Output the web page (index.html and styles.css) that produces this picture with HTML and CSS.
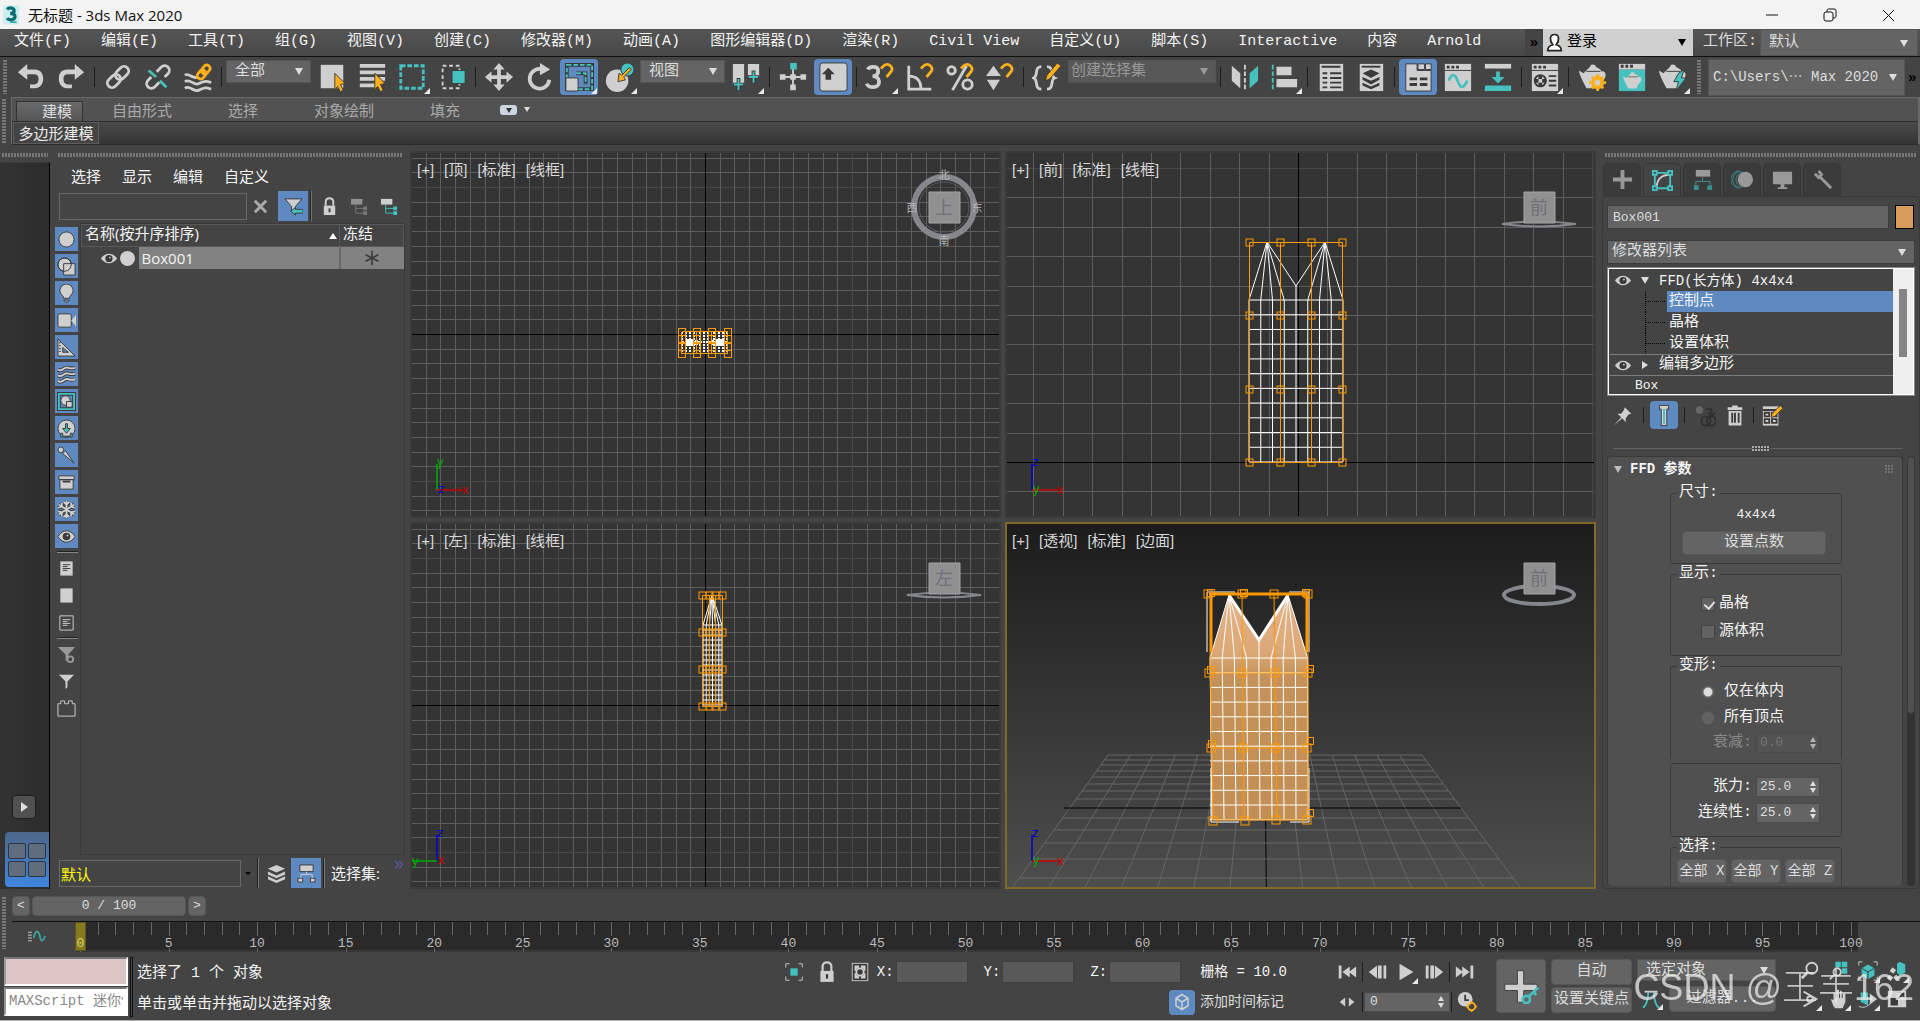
FILE: index.html
```html
<!DOCTYPE html>
<html lang="zh-CN">
<head>
<meta charset="utf-8">
<title>无标题 - 3ds Max 2020</title>
<link rel="stylesheet" href="styles.css">
</head>
<body>
<svg class="sprite" aria-hidden="true">
  <symbol id="undo" viewBox="0 0 32 32"><path class="l" d="M2 11 12 2v6h8c6 0 9 4 9 10s-4 10-10 10h-4v-4h3c4 0 6-2 6-6s-2-5-5-5h-7v6z"/></symbol>
  <symbol id="redo" viewBox="0 0 32 32"><path class="l" d="M30 11 20 2v6h-8c-6 0-9 4-9 10s4 10 10 10h4v-4h-3c-4 0-6-2-6-6s2-5 5-5h7v6z"/></symbol>
  <symbol id="link" viewBox="0 0 32 32"><g class="sl w3" transform="rotate(-45 16 16)"><rect x="2" y="11" width="16" height="10" rx="5"/><rect x="14" y="11" width="16" height="10" rx="5"/></g></symbol>
  <symbol id="unlink" viewBox="0 0 32 32"><g class="sl w3" transform="rotate(-45 16 16)"><path d="M11 11H6a5 5 0 0 0 0 10h7M21 21h5a5 5 0 0 0 0-10h-7"/></g><path class="st w3" d="m6 9 8 7m4 4 7 7"/></symbol>
  <symbol id="bind" viewBox="0 0 32 32"><path class="sl w3" d="M2 14c5-3 8 5 14 2M2 21c6-4 9 5 15 2s8-3 13-1M2 28c6-4 9 5 15 2s8-3 13-1"/><g class="so w3" transform="rotate(-50 22 10)"><rect x="13" y="7" width="10" height="7" rx="3"/><rect x="20" y="7" width="10" height="7" rx="3"/></g></symbol>
  <symbol id="pick" viewBox="0 0 32 32"><path class="l" d="M4 3h24v25H4z"/><path class="o edge" d="m19 12 11 11-5 1 3 6-3 2-3-6-3 4z"/></symbol>
  <symbol id="byname" viewBox="0 0 32 32"><path class="l" d="M3 2h27v4H3zm0 7h27v4H3zm0 7h27v4H3zm0 7h17v4H3z"/><path class="o edge" d="m19 12 11 11-5 1 3 6-3 2-3-6-3 4z"/></symbol>
  <symbol id="rectsel" viewBox="0 0 32 32"><path class="st w3" stroke-dasharray="5 2" d="M4 4h24v24H4z"/></symbol>
  <symbol id="winsel" viewBox="0 0 32 32"><path class="sl w2" stroke-dasharray="4 3" d="M6 4h18v24H6z"/><path class="t edge" d="M16 9h14v14H16z"/></symbol>
  <symbol id="move" viewBox="0 0 32 32"><path class="l" d="m16 1 6 7h-4v6h6v-4l7 6-7 6v-4h-6v6h4l-6 7-6-7h4v-6H8v4l-7-6 7-6v4h6V8h-4z"/></symbol>
  <symbol id="rotate" viewBox="0 0 32 32"><path class="sl w4" d="M20 8a10.500 10.500 0 1 0 7 11"/><path class="l" d="m17 1 11 7-11 6z"/></symbol>
  <symbol id="scale" viewBox="0 0 32 32"><path class="sd w4" d="M3 3h27v26H3zM13 12h10v12"/><path class="st w2" stroke-dasharray="5 2" d="M3 3h27v26H3zM13 12h10v12"/><path class="l edge" d="M2 17h13v14H2z"/></symbol>
  <symbol id="place" viewBox="0 0 32 32"><circle class="l" cx="14" cy="20" r="12"/><circle class="t edge" cx="25" cy="8" r="7"/><path class="o edge" d="m27 6-8 8-3-2-1 9 8-2-2-3 8-8z"/></symbol>
  <symbol id="pivot" viewBox="0 0 32 32"><path class="l" d="M2 2h12v22H2zm16 0h12v14H18z"/><path class="sd w4" d="M8 17v14m-6-7h12M24 9v14m-6-7h12"/><path class="st w2" d="M8 18v12m-5-6h10M24 10v12m-5-6h10"/></symbol>
  <symbol id="manip" viewBox="0 0 32 32"><path class="sl w2" d="M5 16h22M16 6v22"/><path class="l" d="M2 13h6v6H2zm22 0h6v6h-6zM13 24h6v6h-6zM13 13h6v6h-6z"/><path class="t" d="M13 1h7v7h-7z"/></symbol>
  <symbol id="keys" viewBox="0 0 32 32"><rect class="l edge" x="2" y="1" width="29" height="30" rx="3"/><path class="d" d="m11 6 7 7h-4v6H8v-6H4z"/></symbol>
  <symbol id="magnet" viewBox="0 0 32 32"><path class="so w3" d="m17 7 3-3c5-4 11 2 8 6l-5 6"/></symbol>
  <symbol id="three" viewBox="0 0 32 32"><path class="sl w4" d="M3 8c2-4 12-4 11 2 0 4-4 5-6 5 4 0 7 2 7 6 0 8-12 7-13 2"/><use href="#magnet"/></symbol>
  <symbol id="angle" viewBox="0 0 32 32"><path class="sl w3" d="M4 4v25h24M4 15c8 0 13 4 13 14"/><use href="#magnet"/></symbol>
  <symbol id="percent" viewBox="0 0 32 32"><circle class="sl w3" cx="7" cy="9" r="4"/><circle class="sl w3" cx="24" cy="24" r="5"/><path class="sl w3" d="M23 4 8 30"/><use href="#magnet"/></symbol>
  <symbol id="spin" viewBox="0 0 32 32"><path class="l" d="m9 4 8 11H1zm0 26 7-11H2z"/><use href="#magnet"/></symbol>
  <symbol id="sets" viewBox="0 0 32 32"><path class="sl w3" d="M10 5c-8 0-3 10-8 12 5 2 0 12 8 12M16 5c8 0 3 10 8 12-5 2 0 12-8 12"/><path class="o edge" d="m27 1 4 3-12 14-5 2 2-6z"/></symbol>
  <symbol id="mirror" viewBox="0 0 32 32"><path class="l" d="m3 4 9 8v16l-9-8z"/><path class="sl w2" stroke-dasharray="5 2" d="M17 3v27"/><path class="t" d="m31 4-9 8v16l9-8z"/></symbol>
  <symbol id="align" viewBox="0 0 32 32"><path class="st w2" stroke-dasharray="5 2" d="M4 3v27"/><path class="l" d="M8 5h16v9H8zm0 13h22v9H8z"/></symbol>
  <symbol id="scene" viewBox="0 0 32 32"><path class="l" d="M4 2h25v29H4z"/><path class="sd w2" d="M6 5h20M7 12h5m3 0h12M7 17h5m3 0h12M7 22h5m3 0h12M7 27h5m3 0h12"/></symbol>
  <symbol id="layers" viewBox="0 0 32 32"><path class="l" d="M4 2h25v29H4z"/><path class="sd w2" d="M6 5h20"/><path class="d" d="m16 8 9 4-9 5-9-5zm-9 8 9 4 9-4v3l-9 5-9-5zm0 6 9 4 9-4v3l-9 4-9-4z"/></symbol>
  <symbol id="ribbon" viewBox="0 0 32 32"><path class="l edge" d="M3 2h12v7h15v22H3zM16 2h7v6h-7zm8 0h6v6h-6z"/><path class="sd w3" d="M7 18h8m3 0h8M7 24h8m3 0h8"/></symbol>
  <symbol id="curve" viewBox="0 0 32 32"><path class="l" d="M2 2h28v29H2z"/><path class="sd w1" d="M2 9h28"/><path class="d" d="M4 4h3v3H4zm5 0h3v3H9zm5 0h3v3h-3z"/><path class="st w3" d="M6 20c4-9 7-7 10 1s6 7 10-1"/></symbol>
  <symbol id="schem" viewBox="0 0 32 32"><path class="l" d="M2 2h28v5H2z"/><path class="t" d="M2 25h28v6H2zM14 10h4v6h5l-7 7-7-7h5z"/></symbol>
  <symbol id="material" viewBox="0 0 32 32"><path class="l" d="M2 2h28v29H2z"/><path class="sd w1" d="M2 9h28"/><path class="d" d="M4 4h3v3H4zm5 0h3v3H9zm5 0h3v3h-3z"/><circle class="sd w2" cx="11" cy="20" r="6"/><path class="d" d="M9 14h4v4H9zm-4 4h4v4H5zm8 0h4v4h-4zm-4 4h4v4H9z"/><path class="sd w2" d="M20 15h8m-8 5h8m-8 5h8"/></symbol>
  <symbol id="pot" viewBox="0 0 32 32"><path class="l" d="M14 5c0-3 6-3 6 0l5 3 1 2c6-1 6 8 0 11l-3 7H10C7 21 4 18 2 9l5 3 4-4z"/><path class="sd w1" d="M10 10h15"/></symbol>
  <symbol id="rsetup" viewBox="0 0 32 32"><use href="#pot"/><circle class="so w4" cx="22" cy="22" r="5"/><path class="so w3" d="M22 13v3m0 12v3m-9-9h3m12 0h3m-15-6 2 2m8 8 2 2m0-12-2 2m-8 8-2 2"/></symbol>
  <symbol id="rframe" viewBox="0 0 32 32"><path class="t" d="M2 8h28v23H2z"/><path class="l" d="M2 2h28v6H2z"/><path class="d" d="M4 3h3v3H4zm5 0h3v3H9zm5 0h3v3h-3z"/><use href="#pot" x="3" y="9" width="26" height="22"/></symbol>
  <symbol id="render" viewBox="0 0 32 32"><use href="#pot"/><path class="t edge" d="m23 12 6-4-3 9h5L20 31l3-10h-5z"/></symbol>

  <symbol id="o-circle" viewBox="0 0 20 20"><circle class="l edge" cx="10" cy="10" r="8"/></symbol>
  <symbol id="o-shape" viewBox="0 0 20 20"><circle class="l edge" cx="8" cy="8" r="7"/><path class="l edge" d="M7 7h12v12H7z"/><circle class="sd w1" cx="8" cy="8" r="7"/></symbol>
  <symbol id="o-bulb" viewBox="0 0 20 20"><path class="l edge" d="M7 15c0-3-4-4-4-8a7 7 0 0 1 14 0c0 4-4 5-4 8zM7 17h6l-2 2H9z"/></symbol>
  <symbol id="o-cam" viewBox="0 0 20 20"><rect class="l edge" x="1" y="3" width="14" height="14" rx="2"/><path class="l" d="m15 10 5-6v12z"/></symbol>
  <symbol id="o-ruler" viewBox="0 0 20 20"><path class="l edge" fill-rule="evenodd" d="M1 1v18h18zm5 9v5h6z"/><path class="sd w1" d="M2 5h2M2 8h2M2 11h2M2 14h2"/></symbol>
  <symbol id="o-wave" viewBox="0 0 20 20"><path class="sd w4" d="M1 5c5 3 6-4 11-2 4 1 3 1 7 0M1 11c5 3 6-4 11-2 4 1 3 1 7 0M1 17c5 3 6-4 11-2 4 1 3 1 7 0"/><path class="sl w2" d="M1 5c5 3 6-4 11-2 4 1 3 1 7 0M1 11c5 3 6-4 11-2 4 1 3 1 7 0M1 17c5 3 6-4 11-2 4 1 3 1 7 0"/></symbol>
  <symbol id="o-group" viewBox="0 0 20 20"><path class="sd w4" d="M2 2h16v16H2z"/><path class="st w2" d="M2 2h16v16H2z"/><circle class="l edge" cx="9" cy="9" r="5"/><path class="l edge" d="M10 10h6v6h-6z"/></symbol>
  <symbol id="o-xref" viewBox="0 0 20 20"><circle class="l edge" cx="10" cy="10" r="9"/><path class="t edge" d="M9 5h2v5h3l-4 5-4-5h3zM4 15h2v3h8v-3h2v4H4z"/></symbol>
  <symbol id="o-bone" viewBox="0 0 20 20"><circle class="l edge" cx="4" cy="4" r="3"/><path class="l edge" d="m6 8 3-3 9 13z"/></symbol>
  <symbol id="o-box" viewBox="0 0 20 20"><path class="l edge" d="M2 3h16v4H2zm1 4h14v10H3z"/><path class="sd w2" d="M6 9h8"/></symbol>
  <symbol id="o-snow" viewBox="0 0 20 20"><path class="sd w4" d="M10 1v18M2 5l16 10M2 15 18 5M7 2l3 3 3-3M7 18l3-3 3 3M1 8l4-1V3m14 5-4-1V3M1 12l4 1v4m14-5-4 1v4"/><path class="sl w2" d="M10 1v18M2 5l16 10M2 15 18 5M7 2l3 3 3-3M7 18l3-3 3 3M1 8l4-1V3m14 5-4-1V3M1 12l4 1v4m14-5-4 1v4"/></symbol>
  <symbol id="o-eye" viewBox="0 0 20 20"><path class="l edge" d="M1 10c5-8 13-8 18 0-5 8-13 8-18 0z"/><circle class="d" cx="10" cy="10" r="4"/><circle class="l" cx="11" cy="9" r="1"/></symbol>
  <symbol id="o-doc" viewBox="0 0 20 20"><path class="l edge" d="M3 2h14v16H3z"/><path class="sd w1" d="M6 6h8M6 8h5M6 10h8M6 12h5"/></symbol>
  <symbol id="o-blank" viewBox="0 0 20 20"><path class="l edge" d="M3 2h14v16H3z"/></symbol>
  <symbol id="o-docinv" viewBox="0 0 20 20"><path class="sl w1" d="M3 3h14v15H3zM6 7h8M6 9h5M6 11h8M6 13h5"/></symbol>
  <symbol id="o-fgear" viewBox="0 0 20 20"><path fill="#999" d="M1 2h18l-7 8v8l-3-2v-6z"/><circle cx="14" cy="15" r="3" fill="#444" stroke="#999" stroke-width="2"/></symbol>
  <symbol id="o-funnel" viewBox="0 0 20 20"><path class="l" d="M2 3h16l-7 7v6l-2 2v-8z"/></symbol>
  <symbol id="o-brick" viewBox="0 0 20 20"><path class="sl w1" d="M1 18V5h3V2h4v3h4V2h4v3h3v13z"/></symbol>
  <symbol id="o-ffilter" viewBox="0 0 20 20"><path class="l edge" d="M1 2h18l-7 8v9l-4-4v-5z"/><path class="t edge" d="m7 15 5-4v2h8v4h-8v2z"/></symbol>
  <symbol id="lock" viewBox="0 0 20 20"><path class="sl w2" d="M6 9V5c0-5 8-5 8 0v4"/><path class="l" d="M4 9h12v10H4z"/><path class="d" d="M9 12h2v4H9z"/></symbol>
  <symbol id="tree" viewBox="0 0 20 20"><path class="l" d="M1 2h12v6H1z"/><path class="st w1" d="M6 8v9h9M6 12h9"/><path class="t" d="M14 10h4v4h-4zm0 5h4v4h-4z"/></symbol>
  <symbol id="stack" viewBox="0 0 20 20"><path class="l" d="m10 1 9 4-9 4-9-4zm-9 7 9 4 9-4v3l-9 4-9-4zm0 5 9 4 9-4v3l-9 4-9-4z"/></symbol>
  <symbol id="hier" viewBox="0 0 20 20"><path class="l edge" d="M3 1h14v7H3zM1 15h5v4H1zm13 0h5v4h-5z"/><path class="sl w1" d="M10 8v3M4 15v-4h12v4"/></symbol>

  <symbol id="p-plus" viewBox="0 0 24 24"><path fill="#999" d="M10 2h4v8h8v4h-8v8h-4v-8H2v-4h8z"/></symbol>
  <symbol id="p-mod" viewBox="0 0 24 24"><path class="st w2" d="M4 4h16v16H4z"/><path class="sl w2" d="M6 19C6 10 12 6 20 6"/><path fill="#444" class="tb" d="M2 2h4v4H2zm16 0h4v4h-4zM2 18h4v4H2zm16 0h4v4h-4z"/></symbol>
  <symbol id="p-hier" viewBox="0 0 24 24"><path fill="#999" d="M5 2h15v7H5z"/><path stroke="#3d8f8e" fill="none" stroke-width="1" d="M12 9v5M5 18v-4h15v4"/><path fill="#3d8f8e" d="M3 18h5v5H3zm14 0h5v5h-5z"/></symbol>
  <symbol id="p-motion" viewBox="0 0 24 24"><circle fill="#999" cx="15" cy="12" r="8"/><path stroke="#3d8f8e" fill="none" stroke-width="1" d="M10 3C-1 6-1 18 10 21M8 3c-11 3-11 15 0 18M12 4C3 7 3 17 12 20"/></symbol>
  <symbol id="p-disp" viewBox="0 0 24 24"><path fill="#999" d="M2 4h20v13H2zm8 13h4v3h3v2H7v-2h3z"/></symbol>
  <symbol id="p-util" viewBox="0 0 24 24"><path fill="none" stroke="#999" stroke-width="3" d="m10 10 11 11M4 6l4 4 3-3-3-4"/></symbol>
  <symbol id="m-pin" viewBox="0 0 24 24"><path class="l" d="m14 3 7 7-3 1-3 4v4l-4-4-9 8 8-9-4-4h4l3-4z"/></symbol>
  <symbol id="m-tube" viewBox="0 0 24 24"><path class="l edge" d="M7 1h10v4h-2v18H9V5H7z"/><path class="t" d="M11 5h2v16h-2z"/></symbol>
  <symbol id="m-uniq" viewBox="0 0 24 24"><circle cx="6" cy="6" r="5" fill="#666" stroke="#333"/><g fill="none" stroke="#2f2f2f" stroke-width="2"><circle cx="13" cy="18" r="5"/><circle cx="19" cy="18" r="5"/><path d="M13 5h6v8m-4-4 4 4 4-4"/></g></symbol>
  <symbol id="m-trash" viewBox="0 0 24 24"><path class="l" d="M4 3h5V1h6v2h5v3H4zm1 4h14v16H5z"/><path class="sd w2" d="M9 9v11m3-11v11m4-11v11"/></symbol>
  <symbol id="m-conf" viewBox="0 0 24 24"><path class="l" d="M2 2h17v21H2z"/><path class="sd w2" d="M2 6h17M4 9h5v4H4zm8 0h5v4h-5zM4 16h5v4H4zm8 0h5v4h-5z"/><path class="o edge" d="m21 1 3 3-9 9-4 1 1-4z"/></symbol>
  <symbol id="eye" viewBox="0 0 20 12"><path class="l" d="M1 6c5-7 13-7 18 0-5 7-13 7-18 0z"/><circle class="d" cx="10" cy="6" r="4"/><circle class="l" cx="11" cy="5" r="1"/></symbol>

  <symbol id="s-iso" viewBox="0 0 24 24"><path class="t" d="M8 8h8v8H8z"/><path class="sl w1" d="M3 7V3h4m10 0h4v4m0 10v4h-4M7 21H3v-4"/></symbol>
  <symbol id="s-abs" viewBox="0 0 24 24"><path class="l" d="M3 2h18v20H3z"/><path class="sd w2" d="M5 4h14v16H5zM12 5v14M6 12h12"/><circle class="d" cx="12" cy="12" r="5"/><circle class="sl w2" cx="12" cy="12" r="4"/></symbol>
  <symbol id="s-cube" viewBox="0 0 24 24"><path class="sl w2" d="m12 2 8 5v10l-8 5-8-5V7zM4 7l8 5 8-5m-8 5v10"/></symbol>
  <symbol id="k-first" viewBox="0 0 24 24"><path class="l" d="M3 5h3v14H3zm4 7 8-6v12zm7 0 8-6v12z"/></symbol>
  <symbol id="k-prev" viewBox="0 0 24 24"><path class="l" d="m2 12 9-7v14zm10-7h4v14h-4zm6 0h3v14h-3z"/></symbol>
  <symbol id="k-play" viewBox="0 0 24 24"><path class="l" d="m5 3 15 9-15 9z"/></symbol>
  <symbol id="k-next" viewBox="0 0 24 24"><path class="l" d="m22 12-9-7v14zM12 5H8v14h4zM6 5H3v14h3z"/></symbol>
  <symbol id="k-last" viewBox="0 0 24 24"><path class="l" d="M21 5h-3v14h3zm-4 7L9 6v12zm-7 0L2 6v12z"/></symbol>
  <symbol id="k-lr" viewBox="0 0 24 24"><path class="l" d="m4 12 6-5v10zm16 0-6-5v10z"/></symbol>
  <symbol id="k-time" viewBox="0 0 24 24"><circle class="l" cx="10" cy="9" r="8"/><path class="sd w2" d="M10 4v6h4"/><circle class="so w2" cx="17" cy="17" r="4"/><path class="so w2" d="M17 11v2m0 8v2m-6-6h2m8 0h2"/></symbol>
  <symbol id="k-key" viewBox="0 0 40 40"><path class="l edge" d="M16 3h7v15h15v7H23v13h-7V25H2v-7h14z"/><circle class="st w3" cx="26" cy="35" r="4"/><path class="st w3" d="m29 31 10-9m-5 5 3 3"/></symbol>
  <symbol id="k-tan" viewBox="0 0 24 24"><path class="st w2" d="M3 21c3 0 6-9 6-16M21 21c-3 0-6-9-6-16"/><path class="sl w2" d="M5 4h14"/></symbol>
  <symbol id="n-zoom" viewBox="0 0 24 24"><circle class="sl w2" cx="14" cy="9" r="6"/><path class="sl w3" d="m9 14-6 6"/></symbol>
  <symbol id="n-zall" viewBox="0 0 24 24"><path class="t" d="M8 2h6v6H8zm7 0h6v6h-6zm0 7h6v6h-6z"/><circle class="sl w2" cx="10" cy="13" r="4"/><path class="sl w2" d="m7 16-5 5"/></symbol>
  <symbol id="n-ext" viewBox="0 0 24 24"><path class="t" d="m12 5 7 4v8l-7 4-7-4V9z"/><path class="sd w1" d="m5 9 7 4 7-4m-7 4v8"/><path class="sl w1" d="M2 6V2h4m12 0h4v4m0 12v4h-4M6 22H2v-4"/></symbol>
  <symbol id="n-extall" viewBox="0 0 24 24"><path class="t" d="m15 2 6 3v9l-6 3-3-3V4z"/><path class="l" d="m7 8 4 3-3 4-4-3zm-3 8 4 3-3 4-4-3zm7 0 4 3-4 4-3-4z"/></symbol>
  <symbol id="n-fov" viewBox="0 0 24 24"><path class="sl w2" d="m5 4 14 8-14 8"/><circle class="sl w2" cx="12" cy="12" r="3"/></symbol>
  <symbol id="n-pan" viewBox="0 0 24 24"><path class="l" d="M6 20 3 12l3 1V5h2v6h1V2h3v9h1V3h2v8h1V6h3v9l-3 7H8z"/></symbol>
  <symbol id="n-orbit" viewBox="0 0 24 24"><path class="t" d="M4 5h8v14L4 15z"/><path class="l" d="m14 6 8 6-8 6z"/><path class="sl w1" d="M2 20c8 4 14-4 18-9"/></symbol>
  <symbol id="n-max" viewBox="0 0 24 24"><path class="l" d="M2 3h20v18H2z"/><path class="d" d="M5 11h8v8H5zm9-6h6v6l-2-2-4 3-1-2 3-3z"/></symbol>
</svg>

<header class="title">
  <svg class="logo" viewBox="0 0 20 24" aria-hidden="true"><path fill="#cdeeee" d="M0 0h20v24H0z"/><path fill="none" stroke="#0a6c75" stroke-width="4" d="M5 5c3-3 9-2 9 2 0 3-3 3-5 3 3 0 6 1 6 4 0 5-8 5-10 2"/><path stroke="#27a5ab" stroke-width="2" d="M9 21h8"/></svg>
  <h1>无标题 - 3ds Max 2020</h1>
  <div class="winbtns">
    <button aria-label="最小化"><svg viewBox="0 0 16 16"><path d="M2 8h12"/></svg></button>
    <button aria-label="还原"><svg viewBox="0 0 16 16"><rect x="2" y="5" width="9" height="9" rx="2"/><path d="M5 5V4c0-2 1-2 2-2h5c2 0 2 1 2 2v5c0 2-1 2-3 2"/></svg></button>
    <button aria-label="关闭"><svg viewBox="0 0 16 16"><path d="m3 3 11 11M14 3 3 14"/></svg></button>
  </div>
</header>

<div class="menubar">
  <nav>
    <a href="#">文件(F)</a><a href="#">编辑(E)</a><a href="#">工具(T)</a><a href="#">组(G)</a><a href="#">视图(V)</a><a href="#">创建(C)</a><a href="#">修改器(M)</a><a href="#">动画(A)</a><a href="#">图形编辑器(D)</a><a href="#">渲染(R)</a><a href="#">Civil View</a><a href="#">自定义(U)</a><a href="#">脚本(S)</a><a href="#">Interactive</a><a href="#">内容</a><a href="#">Arnold</a>
  </nav>
  <span class="more">»</span>
  <button class="login"><svg viewBox="0 0 20 24" aria-hidden="true"><path fill="#fff" stroke="#222" stroke-width="2" d="M10 2c6 0 6 7 2 12 4 1 6 3 6 7H2c0-4 2-6 6-7C4 9 4 2 10 2z"/></svg>登录<i class="tri black"></i></button>
  <label class="wslabel" for="ws">工作区:</label>
  <span class="sel ws"><select id="ws"><option>默认</option></select></span>
</div>

<div class="toolbar">
  <i class="vgrip"></i>
  <button aria-label="撤消"><svg><use href="#undo"/></svg></button>
  <button aria-label="重做"><svg><use href="#redo"/></svg></button>
  <i class="sep"></i>
  <button aria-label="链接"><svg><use href="#link"/></svg></button>
  <button aria-label="断开链接"><svg><use href="#unlink"/></svg></button>
  <button aria-label="绑定到空间扭曲"><svg><use href="#bind"/></svg></button>
  <i class="sep"></i>
  <span class="sel s86"><select aria-label="选择过滤器"><option>全部</option></select></span>
  <button aria-label="选择对象"><svg><use href="#pick"/></svg></button>
  <button aria-label="按名称选择"><svg><use href="#byname"/></svg></button>
  <button class="fly" aria-label="矩形选择区域"><svg><use href="#rectsel"/></svg></button>
  <button aria-label="窗口/交叉"><svg><use href="#winsel"/></svg></button>
  <i class="sep"></i>
  <button aria-label="移动"><svg><use href="#move"/></svg></button>
  <button aria-label="旋转"><svg><use href="#rotate"/></svg></button>
  <button class="on fly" aria-label="缩放"><svg><use href="#scale"/></svg></button>
  <button class="fly" aria-label="放置"><svg><use href="#place"/></svg></button>
  <span class="sel s86"><select aria-label="参考坐标系"><option>视图</option></select></span>
  <button class="fly" aria-label="轴点中心"><svg><use href="#pivot"/></svg></button>
  <i class="sep"></i>
  <button aria-label="操纵"><svg><use href="#manip"/></svg></button>
  <button class="on" aria-label="键盘快捷键覆盖"><svg><use href="#keys"/></svg></button>
  <i class="sep"></i>
  <button class="fly" aria-label="捕捉开关"><svg><use href="#three"/></svg></button>
  <button aria-label="角度捕捉"><svg><use href="#angle"/></svg></button>
  <button aria-label="百分比捕捉"><svg><use href="#percent"/></svg></button>
  <button aria-label="微调器捕捉"><svg><use href="#spin"/></svg></button>
  <i class="sep"></i>
  <button aria-label="管理选择集"><svg><use href="#sets"/></svg></button>
  <span class="sel s150 off"><select aria-label="命名选择集"><option>创建选择集</option></select></span>
  <i class="sep"></i>
  <button aria-label="镜像"><svg><use href="#mirror"/></svg></button>
  <button class="fly" aria-label="对齐"><svg><use href="#align"/></svg></button>
  <i class="sep"></i>
  <button aria-label="场景资源管理器"><svg><use href="#scene"/></svg></button>
  <button aria-label="层资源管理器"><svg><use href="#layers"/></svg></button>
  <i class="sep"></i>
  <button class="on" aria-label="切换功能区"><svg><use href="#ribbon"/></svg></button>
  <button aria-label="曲线编辑器"><svg><use href="#curve"/></svg></button>
  <button aria-label="图解视图"><svg><use href="#schem"/></svg></button>
  <i class="sep"></i>
  <button class="fly" aria-label="材质编辑器"><svg><use href="#material"/></svg></button>
  <i class="sep"></i>
  <button aria-label="渲染设置"><svg><use href="#rsetup"/></svg></button>
  <button aria-label="渲染帧窗口"><svg><use href="#rframe"/></svg></button>
  <button class="fly" aria-label="渲染"><svg><use href="#render"/></svg></button>
  <i class="vgrip mid"></i>
  <span class="sel path"><select aria-label="项目路径"><option>C:\Users\⋯ Max 2020</option></select></span>
  <span class="more">»</span>
</div>

<div class="ribbon">
  <i class="vgrip"></i>
  <div class="ribbody">
    <div class="tabs">
      <button class="cur">建模</button><button>自由形式</button><button>选择</button><button>对象绘制</button><button>填充</button>
      <button class="pill" aria-label="最小化功能区"><i class="tri dark"></i></button><i class="tri small"></i>
    </div>
    <div class="panel"><button>多边形建模</button></div>
  </div>
</div>

<main>
  <aside class="rail">
    <i class="hgrip"></i>
    <div class="railbody">
      <button class="go" aria-label="展开"><i></i></button>
      <button class="quad" aria-label="视口布局"><i></i><i></i><i></i><i></i></button>
    </div>
  </aside>

  <section class="explorer">
    <i class="hgrip"></i>
    <nav><a href="#">选择</a><a href="#">显示</a><a href="#">编辑</a><a href="#">自定义</a></nav>
    <div class="find">
      <input type="text" aria-label="查找">
      <button aria-label="清除"><svg viewBox="0 0 20 20"><path stroke="#aaa" stroke-width="3" d="m4 4 12 12M16 4 4 16"/></svg></button>
      <button class="on" aria-label="过滤器"><svg><use href="#o-ffilter"/></svg></button>
      <i class="line"></i>
      <button aria-label="锁定"><svg><use href="#lock"/></svg></button>
      <button class="dim" aria-label="子树"><svg><use href="#tree"/></svg></button>
      <button aria-label="层次"><svg><use href="#tree"/></svg></button>
    </div>
    <div class="exbody">
      <div class="filters">
        <button class="on" aria-label="几何体"><svg><use href="#o-circle"/></svg></button>
        <button class="on" aria-label="图形"><svg><use href="#o-shape"/></svg></button>
        <button class="on" aria-label="灯光"><svg><use href="#o-bulb"/></svg></button>
        <button class="on" aria-label="摄影机"><svg><use href="#o-cam"/></svg></button>
        <button class="on" aria-label="辅助对象"><svg><use href="#o-ruler"/></svg></button>
        <button class="on" aria-label="空间扭曲"><svg><use href="#o-wave"/></svg></button>
        <button class="on" aria-label="组"><svg><use href="#o-group"/></svg></button>
        <button class="on" aria-label="外部参照"><svg><use href="#o-xref"/></svg></button>
        <button class="on" aria-label="骨骼"><svg><use href="#o-bone"/></svg></button>
        <button class="on" aria-label="容器"><svg><use href="#o-box"/></svg></button>
        <button class="on" aria-label="冻结"><svg><use href="#o-snow"/></svg></button>
        <button class="on" aria-label="隐藏"><svg><use href="#o-eye"/></svg></button>
        <i></i>
        <button aria-label="全部"><svg><use href="#o-doc"/></svg></button>
        <button aria-label="无"><svg><use href="#o-blank"/></svg></button>
        <button aria-label="反转"><svg><use href="#o-docinv"/></svg></button>
        <i></i>
        <button aria-label="配置过滤器"><svg><use href="#o-fgear"/></svg></button>
        <button aria-label="高级过滤器"><svg><use href="#o-funnel"/></svg></button>
        <button aria-label="容器节点"><svg><use href="#o-brick"/></svg></button>
      </div>
      <div class="treebox">
        <table>
          <thead><tr><th>名称(按升序排序)<i class="up"></i></th><th class="fz">冻结</th></tr></thead>
          <tbody><tr><td><div class="node"><svg class="eye"><use href="#eye"/></svg><i class="dot"></i><span>Box001</span></div></td><td class="fz sel2"><svg class="flake" viewBox="0 0 20 20"><path d="M10 1v18M2 6l16 8M2 14l16-8"/></svg></td></tr></tbody>
        </table>
      </div>
    </div>
    <div class="exfoot">
      <input type="text" value="默认" aria-label="资源管理器名称">
      <i class="tri tiny"></i>
      <i class="line"></i>
      <button aria-label="按层排序"><svg><use href="#stack"/></svg></button>
      <button class="on" aria-label="按层次排序"><svg><use href="#hier"/></svg></button>
      <i class="line"></i>
      <span>选择集:</span><b>»</b>
    </div>
  </section>

  <section class="views">
    <div class="vp" id="vtop"><svg viewBox="0 0 591 367" preserveAspectRatio="xMidYMid slice"></svg><p><span>[+]</span><span>[顶]</span><span>[标准]</span><span>[线框]</span></p></div>
    <div class="vp" id="vfront"><svg viewBox="0 0 591 367" preserveAspectRatio="xMidYMid slice"></svg><p><span>[+]</span><span>[前]</span><span>[标准]</span><span>[线框]</span></p></div>
    <div class="vp" id="vleft"><svg viewBox="0 0 591 367" preserveAspectRatio="xMidYMid slice"></svg><p><span>[+]</span><span>[左]</span><span>[标准]</span><span>[线框]</span></p></div>
    <div class="vp active" id="vpersp"><svg viewBox="0 0 591 367" preserveAspectRatio="xMidYMid slice"></svg><p><span>[+]</span><span>[透视]</span><span>[标准]</span><span>[边面]</span></p></div>
  </section>

  <aside class="command">
    <i class="hgrip"></i>
    <div class="ctabs">
      <button aria-label="创建"><svg><use href="#p-plus"/></svg></button>
      <button class="cur" aria-label="修改"><svg><use href="#p-mod"/></svg></button>
      <button aria-label="层次"><svg><use href="#p-hier"/></svg></button>
      <button aria-label="运动"><svg><use href="#p-motion"/></svg></button>
      <button aria-label="显示"><svg><use href="#p-disp"/></svg></button>
      <button aria-label="实用程序"><svg><use href="#p-util"/></svg></button>
    </div>
    <div class="cbody">
      <div class="namerow"><input type="text" value="Box001" aria-label="名称"><button class="swatch" aria-label="颜色"></button></div>
      <span class="sel mods"><select aria-label="修改器列表"><option>修改器列表</option></select></span>
      <div class="mstack">
        <ul>
          <li><svg class="eye"><use href="#eye"/></svg><i class="tri open"></i><span class="mix">FFD(长方体) 4x4x4</span></li>
          <li class="sub hot"><i class="branch"></i><span>控制点</span></li>
          <li class="sub"><i class="branch"></i><span>晶格</span></li>
          <li class="sub"><i class="branch"></i><span>设置体积</span></li>
          <li class="rule"><svg class="eye"><use href="#eye"/></svg><i class="tri shut"></i><span>编辑多边形</span></li>
          <li class="rule base"><span class="num">Box</span></li>
        </ul>
        <div class="mscroll"><i></i></div>
      </div>
      <div class="mtools">
        <button aria-label="锁定堆栈"><svg><use href="#m-pin"/></svg></button><i class="sep"></i>
        <button class="on" aria-label="显示最终结果"><svg><use href="#m-tube"/></svg></button><i class="sep"></i>
        <button aria-label="使唯一"><svg><use href="#m-uniq"/></svg></button>
        <button aria-label="移除修改器"><svg><use href="#m-trash"/></svg></button><i class="sep"></i>
        <button aria-label="配置修改器集"><svg><use href="#m-conf"/></svg></button>
      </div>
      <div class="splitter"><i></i></div>
      <div class="rollwrap">
        <div class="rollout">
          <h2><i class="tri open"></i>FFD 参数<i class="dots"></i></h2>
          <fieldset class="f-dim"><legend>尺寸:</legend><p>4x4x4</p><button>设置点数</button></fieldset>
          <fieldset class="f-show"><legend>显示:</legend>
            <label><input type="checkbox" checked>晶格</label>
            <label><input type="checkbox">源体积</label></fieldset>
          <fieldset class="f-def"><legend>变形:</legend>
            <label><input type="radio" name="d" checked>仅在体内</label>
            <label><input type="radio" name="d">所有顶点</label>
            <div class="spinrow off"><label for="fo">衰减:</label><span class="spin"><input id="fo" type="text" value="0.0" disabled></span></div></fieldset>
          <fieldset class="f-ten">
            <div class="spinrow"><label for="te">张力:</label><span class="spin"><input id="te" type="text" value="25.0"></span></div>
            <div class="spinrow"><label for="co">连续性:</label><span class="spin"><input id="co" type="text" value="25.0"></span></div></fieldset>
          <fieldset class="f-sel"><legend>选择:</legend><div><button>全部 X</button><button>全部 Y</button><button>全部 Z</button></div></fieldset>
        </div>
        <div class="rscroll"><i></i></div>
      </div>
    </div>
  </aside>
</main>

<section class="track">
  <i class="vgrip"></i>
  <div class="slider"><button aria-label="上一帧">&lt;</button><button class="thumb">0 / 100</button><button aria-label="下一帧">&gt;</button></div>
  <div class="rulerrow">
    <button class="mini" aria-label="迷你曲线编辑器"><svg viewBox="0 0 20 14"><path stroke="#cfcfcf" stroke-width="1" d="M0 2h4M0 5h4M0 8h4M0 11h4"/><path fill="none" stroke="#3a9f9e" stroke-width="2" d="M6 8c2-9 5-9 7 0 1 4 3 4 5-2"/></svg></button>
    <div class="ruler"><div class="ticks" id="ticks"></div></div>
  </div>
</section>

<footer>
  <div class="script"><input type="text" class="pink" aria-label="宏录制器"><input type="text" value="MAXScript 迷你侦听器" aria-label="侦听器"></div>
  <i class="vline"></i>
  <div class="msgs"><p>选择了 1 个 对象</p><p>单击或单击并拖动以选择对象</p></div>
  <div class="coords">
    <div class="row">
      <button aria-label="孤立当前选择"><svg><use href="#s-iso"/></svg></button>
      <button aria-label="选择锁定"><svg><use href="#lock"/></svg></button>
      <button aria-label="绝对模式"><svg><use href="#s-abs"/></svg></button>
      <label>X:<input type="text"></label><label>Y:<input type="text"></label><label>Z:<input type="text"></label>
      <span class="gridtxt">栅格 = 10.0</span>
    </div>
    <div class="row tag"><button class="on" aria-label="时间标记"><svg><use href="#s-cube"/></svg></button><span>添加时间标记</span></div>
  </div>
  <div class="play">
    <div class="row"><button aria-label="转至开头"><svg><use href="#k-first"/></svg></button><i class="sep"></i><button aria-label="上一帧"><svg><use href="#k-prev"/></svg></button><button class="fly" aria-label="播放"><svg><use href="#k-play"/></svg></button><button aria-label="下一帧"><svg><use href="#k-next"/></svg></button><i class="sep"></i><button aria-label="转至结尾"><svg><use href="#k-last"/></svg></button></div>
    <div class="row"><button aria-label="关键点模式"><svg><use href="#k-lr"/></svg></button><i class="sep"></i><span class="spin"><input type="text" value="0" aria-label="当前帧"></span><i class="sep"></i><button aria-label="时间配置"><svg><use href="#k-time"/></svg></button></div>
  </div>
  <div class="keys">
    <button class="big" aria-label="设置关键点"><svg><use href="#k-key"/></svg></button>
    <div class="kcol"><button>自动</button><button>设置关键点</button></div>
    <div class="kcol wide"><span class="sel"><select aria-label="关键点对象"><option>选定对象</option></select></span>
      <div class="krow"><button class="bare fly" aria-label="切线"><svg><use href="#k-tan"/></svg></button><button class="filt">过滤器...</button></div></div>
  </div>
  <div class="nav">
    <button aria-label="缩放"><svg><use href="#n-zoom"/></svg></button><button aria-label="缩放所有"><svg><use href="#n-zall"/></svg></button><button class="fly" aria-label="最大化显示"><svg><use href="#n-ext"/></svg></button><button class="fly" aria-label="所有最大化"><svg><use href="#n-extall"/></svg></button>
    <button class="fly" aria-label="视野"><svg><use href="#n-fov"/></svg></button><button class="fly" aria-label="平移"><svg><use href="#n-pan"/></svg></button><button class="fly" aria-label="环绕"><svg><use href="#n-orbit"/></svg></button><button aria-label="最大化视口"><svg><use href="#n-max"/></svg></button>
  </div>
  <div class="mark">CSDN @王丰162</div>
</footer>
<script src="script.js"></script>
</body>
</html>
```
FILE: styles.css
```css
:root {
  --bg: #444;
  --field: #646464;
  --edge: #393939;
  --blue: #5f8ac1;
  --light: #cfcfcf;
  --teal: #45c1bf;
  --orange: #fdb01a;
  --ui: "Liberation Mono", "Noto Sans CJK SC", monospace;
  --sans: "Open Sans", "Noto Sans CJK SC", sans-serif;
}
* { box-sizing: border-box; }
body {
  margin: 0;
  height: 100vh;
  display: flex;
  flex-direction: column;
  overflow: hidden;
  background: var(--bg);
  color: #f4f4f4;
  font: 15px/20px var(--ui);
}
button, input, select { font: inherit; color: inherit; }
button { border: 0; padding: 0; background: none; display: flex; align-items: center; justify-content: center; flex: none; }
a { color: inherit; text-decoration: none; }
p, h1, h2, ul { margin: 0; padding: 0; }
i { display: block; flex: none; font-style: normal; }
input { min-width: 0; border-radius: 0; }

.sprite { position: absolute; width: 0; height: 0; }
.l { fill: var(--light); }
.t { fill: var(--teal); }
.o { fill: var(--orange); }
.d { fill: #3a3a3a; }
.sl, .st, .so, .sd { fill: none; }
.sl { stroke: var(--light); }
.st { stroke: var(--teal); }
.so { stroke: var(--orange); }
.sd { stroke: #3a3a3a; }
.w1 { stroke-width: 1px; }
.w2 { stroke-width: 2px; }
.w3 { stroke-width: 3px; }
.w4 { stroke-width: 4px; }
.edge { stroke: #3a3a3a; stroke-width: 1px; }
.tb { stroke: var(--teal); stroke-width: 2px; }

.on { background: var(--blue); }
.tri { width: 0; height: 0; border: 4px solid transparent; border-top: 7px solid #ddd; border-bottom: 0; }
.tri.black { border-top-color: #000; }
.fly { position: relative; }
.fly::after { content: ""; position: absolute; right: 2px; bottom: 2px; border: 3px solid transparent; border-right-color: #e8e8e8; border-bottom-color: #e8e8e8; }
.sep { width: 7px; height: 20px; border-left: 3px solid transparent; border-right: 3px solid transparent; background: #1c1c1c; background-clip: padding-box; }
.vgrip { width: 4px; background: radial-gradient(circle at 1px 1px, #999 1px, transparent 1px) 0 0 / 2px 3px; opacity: .6; }
.hgrip { height: 4px; background: radial-gradient(circle at 1px 1px, #aaa 1px, transparent 1px) 0 0 / 3px 2px; opacity: .5; }
.more { font: bold 15px/20px "Liberation Sans", sans-serif; color: #000; }

.sel { position: relative; display: flex; }
.sel::after { content: ""; position: absolute; right: 8px; top: 50%; margin-top: -3px; border: 4px solid transparent; border-top: 7px solid #ddd; border-bottom: 0; pointer-events: none; }
.sel select { appearance: none; width: 100%; border: 1px solid #545454; border-radius: 0; background: var(--field); padding: 1px 8px 0; color: #ddd; }

.title { height: 29px; background: #f3f3f3; color: #111; display: flex; align-items: center; padding-left: 3px; flex: none; }
.logo { width: 16px; height: 20px; margin-right: 9px; }
.title h1 { font: 15px/20px var(--sans); flex: 1; }
.winbtns { display: flex; gap: 22px; padding-right: 14px; }
.winbtns button { width: 36px; height: 28px; }
.winbtns svg { width: 16px; height: 16px; fill: none; stroke: #111; }

.menubar { height: 28px; flex: none; display: flex; background: linear-gradient(#555, #484848); border-bottom: 1px solid #111; }
.menubar nav { display: flex; gap: 30px; padding-left: 14px; align-items: center; white-space: nowrap; flex: 1; padding-bottom: 1px; }
.menubar .more { width: 18px; background: var(--bg); line-height: 26px; text-align: center; }
.login { width: 150px; background: var(--light); color: #000; padding: 0 7px 0 3px; gap: 4px; justify-content: flex-start; }
.login svg { width: 17px; height: 22px; }
.login .tri { margin-left: auto; }
.wslabel { width: 67px; padding-left: 10px; line-height: 26px; color: #ddd; white-space: nowrap; }
.ws { width: 158px; margin-right: 2px; }
.ws::after { right: 10px; }

.toolbar { height: 40px; flex: none; display: flex; align-items: center; }
.toolbar > button { width: 38px; height: 36px; margin: 0 1px; border-radius: 4px; }
.toolbar svg { width: 30px; height: 30px; }
.toolbar .fly::after { right: 1px; bottom: 1px; }
.toolbar > .vgrip { height: 34px; margin: 0 4px 0 3px; }
.toolbar > .vgrip.mid { margin: 0 7px 0 5px; }
.toolbar > .sel { height: 23px; margin: 0 1px 12px; flex: none; }
.toolbar > .sel.s86 { width: 85px; }
.toolbar > .sel.s150 { width: 148px; }
.off select { color: #999; background: #585858; padding-left: 2px; }
.off::after { border-top-color: #999; }
.toolbar > .sel.path { flex: 1; height: 37px; margin: 0 3px 0 0; font-size: 14px; }
.toolbar .path select { padding: 0 4px; }
.toolbar > .more { width: 12px; }

.ribbon { height: 48px; flex: none; display: flex; font-family: var(--sans); }
.ribbon > .vgrip { margin: 2px 5px 2px 2px; }
.ribbody { flex: 1; min-width: 0; border: 1px solid #6a6a6a; border-bottom: 1px solid #2c2c2c; border-right-width: 2px; }
.tabs { height: 24px; display: flex; background: #525252; border-bottom: 1px solid #2c2c2c; padding: 3px 0 0 4px; color: #aaa; }
.tabs button { margin-right: 56px; padding-bottom: 2px; }
.tabs .cur { width: 67px; margin-right: 29px; padding-left: 15px; background: linear-gradient(#6a6a6a, #555); border: 1px solid #333; border-bottom: 0; color: #ddd; }
.tabs button:nth-child(5) { margin-right: 40px; }
.tabs .pill { width: 17px; height: 10px; margin: 4px 7px 0 0; padding: 0; background: #ccd6e0; border-radius: 3px; }
.tabs .pill .tri, .tabs .small { border-width: 3px; border-top-width: 5px; border-bottom: 0; }
.tabs .pill .tri { border-top-color: #333; }
.tabs .small { margin-top: 6px; }
.panel { background: linear-gradient(#4b4b4b, #343434); height: 22px; display: flex; }
.panel button { margin-left: 1px; width: 86px; border: 1px solid #5c5c5c; background: #444; color: #eee; }

main { flex: 1; min-height: 0; display: flex; padding-top: 6px; }
.rail { width: 50px; display: flex; flex-direction: column; }
.rail > .hgrip { margin: 2px 2px 5px; }
.railbody { flex: 1; background: linear-gradient(90deg, #333, #2c2c2c); border-right: 1px solid #000; border-top: 1px solid #3a3a3a; display: flex; flex-direction: column; justify-content: flex-end; }
.go { width: 24px; height: 24px; margin: 0 0 13px 12px; background: #505050; border: 1px solid #1d1d1d; border-radius: 4px; }
.go i { border: 5px solid transparent; border-left: 7px solid #ddd; border-right: 0; }
.quad { width: 44px; height: 55px; margin: 0 0 2px 5px; border-radius: 4px 0 0 4px; background: linear-gradient(#4d6788, #3f86e0); display: grid; grid-template-columns: 18px 18px; grid-template-rows: 16px 16px; gap: 2px; justify-content: center; align-content: center; align-items: stretch; }
.quad i { background: #5f6d7f; border: 1px solid #273547; border-radius: 2px; }

.explorer { width: 360px; display: flex; flex-direction: column; font-family: var(--sans); }
.explorer > .hgrip { margin: 2px 8px 12px; }
.explorer nav { display: flex; gap: 21px; padding-left: 21px; margin-top: -3px; height: 25px; }
.find { display: flex; align-items: center; height: 30px; padding-left: 9px; }
.find button { width: 30px; height: 30px; }
.find input { width: 188px; height: 27px; background: none; border: 1px solid #686868; margin-right: -2px; }
.find button:nth-of-type(1) { margin-right: 3px; }
.find svg, .filters svg, .exfoot svg { width: 19px; height: 19px; }
.dim { filter: grayscale(1) brightness(.7); }
.line { width: 2px; height: 30px; background: #777; border-left: 1px solid #222; margin: 0 2px; }
.exbody { flex: 1; min-height: 0; display: flex; padding: 2px 5px 2px; }
.filters { width: 25px; padding-top: 4px; }
.filters button { width: 23px; height: 24px; margin-bottom: 3px; }
.filters i { height: 2px; margin: 1px 2px 3px; border-top: 1px solid #222; background: #888; }
.treebox { flex: 1; border: 1px solid #3a3a3a; }
table { width: 100%; border-collapse: collapse; table-layout: fixed; }
th { height: 22px; border: 1px solid #585858; font-weight: normal; text-align: left; vertical-align: top; padding: 0 3px; line-height: 17px; position: relative; }
.fz { width: 64px; }
.up { position: absolute; right: 2px; top: 8px; border: 4px solid transparent; border-bottom: 6px solid #fff; border-top: 0; }
td { padding: 0; height: 22px; }
.node { display: flex; align-items: center; padding-left: 18px; height: 22px; }
.eye { width: 18px; height: 11px; }
.dot { width: 15px; height: 15px; border-radius: 50%; background: var(--light); margin: 0 4px 0 2px; }
.node span { flex: 1; background: #828282; line-height: 22px; padding-left: 3px; }
.sel2 { background: #828282; border-left: 2px solid #686868; text-align: center; }
.flake { width: 16px; height: 16px; display: block; margin: auto; fill: none; stroke: #3a3a3a; stroke-width: 2px; }
.exfoot { height: 32px; display: flex; align-items: center; padding-left: 9px; }
.exfoot input { width: 182px; height: 27px; background: none; border: 1px solid #686868; color: #ff0; padding: 0 1px; }
.exfoot .tiny { border-width: 3px; border-top: 3px solid #000; border-bottom: 0; margin: 0 4px; }
.exfoot button { width: 30px; height: 30px; }
.exfoot span { margin-left: 4px; flex: 1; }
.exfoot b { color: #55589c; font-size: 20px; font-weight: normal; align-self: flex-start; margin-right: 6px; line-height: 12px; }

.views { flex: 1; min-width: 0; display: grid; grid-template-columns: 1fr 1fr; grid-template-rows: 1fr 1fr; gap: 4px; margin-right: 6px; }
.vp { position: relative; min-height: 0; overflow: hidden; background: #343434; }
.vp > svg { display: block; width: 100%; height: 100%; }
.vp::after { content: ""; position: absolute; inset: 0; border: 2px solid #3a3a3a; pointer-events: none; }
.vp.active { background: linear-gradient(#1c1c1c, #4e4e4e); }
.vp.active::after { border-color: #7e6a29; }
.vp p { position: absolute; left: 7px; top: 9px; display: flex; gap: 10px; font-family: "Liberation Sans", "Noto Sans CJK SC", sans-serif; color: #d8d8d8; }

.command { width: 318px; display: flex; flex-direction: column; }
.command > .hgrip { margin: 2px 3px 6px; }
.ctabs { display: flex; gap: 2px; padding-left: 1px; }
.ctabs button { width: 38px; height: 33px; background: #3b3b3b; border: 1px solid #373737; border-radius: 5px 5px 0 0; }
.ctabs .cur { background: var(--bg); border-bottom: 0; }
.ctabs svg { width: 23px; height: 23px; }
.cbody { flex: 1; min-height: 0; display: flex; flex-direction: column; padding: 8px 4px 2px; border: 1px solid var(--edge); border-radius: 4px; }
.namerow { display: flex; justify-content: space-between; }
.namerow input { width: 282px; height: 24px; background: var(--field); border: 1px solid #3c3c3c; font-size: 13px; padding: 0 5px; color: #ddd; }
.swatch { width: 19px; height: 24px; background: #d89c5c; border: 1px solid #000; margin-right: 1px; }
.mods { height: 24px; margin: 11px 0 3px; flex: none; }
.mods select { padding: 0 4px; border-color: #3c3c3c; }
.mods::after { right: 9px; }
.mstack { display: flex; height: 129px; flex: none; border: 2px solid #fff; outline: 1px solid #888; outline-offset: -1px; }
.mstack ul { flex: 1; list-style: none; overflow: hidden; padding-top: 1px; }
.mstack li { display: flex; align-items: center; height: 21px; padding-left: 5px; }
.mix { font-size: 14px; }
.num { font-size: 13px; }
.mstack .tri { margin: 0 10px 0 9px; }
.mstack .shut { border: 4px solid transparent; border-left: 6px solid #ddd; border-right: 0; margin: 0 11px 0 10px; }
.mstack .sub { padding: 0 0 0 36px; }
.branch { width: 20px; height: 21px; border-left: 1px dotted #000; background: linear-gradient(90deg, #000 50%, transparent 50%) 0 10px / 2px 1px repeat-x; margin-right: 2px; }
.sub span { flex: 1; padding-left: 2px; line-height: 21px; }
.hot span { background: var(--blue); }
.mstack .rule { border-top: 1px solid #7c7c7c; }
.mstack .base { padding-left: 26px; }
.mscroll { width: 20px; background: #efefef; padding: 20px 6px; }
.mscroll i { height: 68px; background: #858585; }
.mtools { display: flex; align-items: center; height: 38px; padding-left: 1px; flex: none; }
.mtools button { width: 28px; height: 28px; margin: 0 1px; border-radius: 4px; }
.mtools svg { width: 22px; height: 23px; }
.mtools .sep { margin: 0 2px; height: 16px; }
.mtools .sep:nth-of-type(3) { margin: 0; }
.splitter { height: 22px; flex: none; background: linear-gradient(#626262, #626262) 6px 14px / 94% 1px no-repeat; }
.splitter i { width: 18px; height: 5px; margin: 12px auto 0; background: radial-gradient(circle at 1px 1px, #aaa 1px, #444 1px) 0 0 / 3px 3px; }
.rollwrap { flex: 1; min-height: 0; display: flex; gap: 4px; overflow: hidden; }
.rollout { flex: 1; background: #505050; border: 1px solid var(--edge); border-bottom: 0; border-radius: 4px; overflow: hidden; }
.rscroll { width: 8px; background: #333; border-radius: 4px; }
.rscroll i { height: 258px; background: #505050; border: 1px solid #3a3a3a; border-radius: 4px; }
.rollout h2 { font-size: 14px; line-height: 24px; height: 24px; display: flex; align-items: center; padding: 0 8px 0 6px; margin-bottom: 2px; }
.rollout h2 .tri { margin-right: 8px; border-top-color: #bbb; }
.dots { width: 9px; height: 9px; margin-left: auto; background: radial-gradient(circle at 1px 1px, #888 1px, transparent 1px) 0 0 / 3px 3px; opacity: .6; }
fieldset { width: 172px; margin: 0; border: 1px solid #3a3a3a; border-radius: 3px; padding: 0; min-width: 0; }
.rollout fieldset { margin-left: 62px; }
legend { margin-left: 6px; padding: 0 2px; height: 20px; line-height: 20px; }
.f-dim { height: 81px; }
.f-dim p { text-align: center; font-size: 13px; margin-bottom: 6px; padding-top: 2px; }
.f-dim button { width: 144px; height: 24px; margin-left: 11px; }
.rollout button, .slider button, .kcol button, .big { background: var(--field); border: 1px solid #575757; border-radius: 4px; color: #ddd; }
.f-show { height: 92px; }
.f-show label, .f-def > label { display: flex; align-items: center; height: 28px; padding-left: 30px; gap: 4px; }
.f-show label:first-of-type { margin-top: 6px; }
input[type=checkbox], input[type=radio] { appearance: none; width: 14px; height: 14px; margin: 0; background: #626262; border: 1px solid #444; position: relative; }
input[type=checkbox]:checked::before { content: ""; position: absolute; left: 4px; top: 1px; width: 5px; height: 8px; border: solid #ddd; border-width: 0 2px 2px 0; transform: rotate(40deg); }
input[type=radio] { border-radius: 50%; border-color: #585858; }
input[type=radio]:checked { background: radial-gradient(circle, #ddd 4px, #626262 5px); }
.f-def { height: 103px; border-bottom: 0; border-radius: 3px 3px 0 0; }
.f-def > label { height: 26px; gap: 9px; }
.f-def legend { margin-bottom: 3px; }
.spinrow { display: flex; height: 26px; align-items: center; justify-content: flex-end; gap: 4px; padding-right: 21px; }
.spinrow.off { color: #8a8a8a; height: 24px; }
.spin { position: relative; display: flex; }
.spin input { width: 64px; height: 20px; background: var(--field); border: 1px solid #4a4a4a; padding: 0 3px; font-size: 13px; color: #ddd; }
.spinrow.off input { background: #555; color: #888; }
.spin::before, .spin::after { content: ""; position: absolute; right: 4px; border: 3px solid transparent; }
.spin::before { top: 4px; border-bottom: 5px solid #ddd; border-top: 0; }
.spin::after { bottom: 4px; border-top: 5px solid #ddd; border-bottom: 0; }
.off .spin { opacity: .7; }
.f-ten { height: 74px; margin-top: 4px; padding-top: 10px; }
.f-sel { height: 120px; }
.f-sel div { display: flex; gap: 4px; padding-left: 6px; margin-top: 2px; }
.f-sel button { width: 50px; height: 24px; font-size: 14px; white-space: pre; }

.track { flex: none; height: 63px; position: relative; padding-left: 12px; }
.track > .vgrip { position: absolute; left: 2px; top: 8px; height: 52px; }
.slider { display: flex; gap: 2px; padding: 7px 0 5px; }
.slider button { width: 18px; height: 20px; font-size: 13px; }
.slider .thumb { width: 154px; }
.rulerrow { display: flex; height: 31px; border-top: 1px solid #111; padding-right: 62px; }
.mini { width: 63px; padding-right: 12px; }
.mini svg { width: 19px; height: 14px; }
.ruler { flex: 1; background: #2a2a2a; padding: 0 7px 0 5px; border-bottom: 2px solid #383838; }
.ticks { position: relative; height: 29px; }
.tick { position: absolute; top: 0; width: 1px; height: 13px; background: #666; }
.tick.five { height: 30px; }
.tick.five span { position: absolute; left: -16px; top: 14px; width: 32px; text-align: center; font-size: 13px; line-height: 16px; color: #bbb; background: linear-gradient(90deg, transparent 25%, #2a2a2a 25% 75%, transparent 75%); height: 12px; }
.head { position: absolute; left: -5px; top: 0; width: 11px; height: 29px; background: #857a1e; border: 1px solid #5d561c; color: #dcd26a; font-size: 13px; line-height: 42px; text-align: center; }

footer { flex: none; height: 69px; display: flex; position: relative; border-bottom: 1px solid #b0b0b0; padding: 5px 7px 0 4px; }
.script { width: 124px; }
.script input { display: block; width: 124px; height: 29px; border: 2px solid #fff; border-top-color: #777; border-left-color: #999; background: #fff; color: #888; margin-bottom: 1px; padding: 0 3px 6px; font-size: 14px; }
.script .pink { background: #dec5c5; }
.vline { width: 3px; margin: 0 4px 0 2px; height: 60px; border: 1px solid #111; }
.msgs { flex: 1; padding-top: 7px; white-space: nowrap; }
.msgs p { height: 31px; }
.coords { padding-right: 46px; }
.row { display: flex; align-items: center; height: 30px; }
.coords button { width: 33px; height: 28px; }
.coords svg { width: 22px; height: 22px; }
.coords label { display: flex; align-items: center; gap: 2px; font-size: 14px; margin-right: 16px; }
.coords input { width: 72px; height: 22px; background: #595959; border: 1px solid #404040; }
.gridtxt { margin-left: 3px; font-size: 14px; white-space: nowrap; }
.coords .tag { justify-content: flex-end; gap: 5px; font-size: 14px; color: #ddd; padding-right: 3px; }
.coords .tag button { width: 26px; height: 25px; border-radius: 4px; }
.coords .tag svg { width: 18px; height: 18px; }
.play { width: 163px; }
.play button { width: 28px; height: 28px; }
.play svg { width: 22px; height: 22px; }
.play .sep { width: 3px; border-width: 1px; }
.play .spin input { width: 86px; padding-left: 5px; }
.play .spin::before, .play .spin::after { right: 6px; }
.keys { display: flex; gap: 5px; padding-top: 2px; width: 281px; }
.big { width: 50px; height: 54px; }
.big svg { width: 36px; height: 36px; }
.kcol { width: 81px; display: flex; flex-direction: column; gap: 2px; }
.kcol > button { width: 81px; height: 26px; }
.kcol.wide { width: 139px; gap: 5px; }
.kcol .sel select { height: 22px; }
.krow { display: flex; justify-content: space-between; }
.kcol .bare { width: 28px; height: 26px; background: none; border: 0; }
.bare svg { width: 22px; height: 22px; }
.kcol .filt { width: 107px; height: 26px; }
.nav { display: grid; grid-template-columns: repeat(4, 29px); grid-auto-rows: 28px; padding-left: 18px; width: 136px; }
.nav svg { width: 22px; height: 22px; }
.mark { position: absolute; right: 6px; top: 18px; font: 36px/36px "Liberation Sans", "Noto Sans CJK SC", sans-serif; font-weight: 300; color: #ececec; opacity: .75; pointer-events: none; white-space: nowrap; }
```
FILE: script.js
```js
// Time ruler: one tick per frame, a number on every fifth.
const ticks = document.getElementById('ticks');
let t = '';
for (let i = 0; i <= 100; i++) {
  t += `<i class="tick${i % 5 ? '' : ' five'}" style="left:${i}%">${i % 5 || !i ? '' : `<span>${i}</span>`}</i>`;
}
ticks.innerHTML = t + '<div class="head">0</div>';

const line = (x1, y1, x2, y2, c, w = 1) => `<path d="M${x1} ${y1}L${x2} ${y2}" stroke="${c}" stroke-width="${w}" fill="none"/>`;
const box = (x, y, s = 7, c = '#f90') => `<rect x="${x - s / 2}" y="${y - s / 2}" width="${s}" height="${s}" fill="none" stroke="${c}"/>`;

// Construction plane of an orthographic view, with the world axes in black.
function grid(cx, cy, step) {
  let s = '<g shape-rendering="crispEdges">';
  for (let i = -60; i <= 60; i++) {
    const c = i % 10 ? '#5e5e5e' : '#484848';
    const x = Math.round(cx + i * step) + .5, y = Math.round(cy + i * step) + .5;
    if (i) s += line(x, 0, x, 367, c) + line(0, y, 591, y, c);
  }
  return s + line(cx + .5, 0, cx + .5, 367, '#000') + line(0, cy + .5, 591, cy + .5, '#000') + '</g>';
}

function tripod(x, y, up, side, upC, sideC, dot, dotC, flip) {
  const d = flip ? -1 : 1;
  return line(x, y, x, y - 26, upC, 1.500) + line(x, y, x + 26 * d, y, sideC, 1.500) +
    `<g font-family="Liberation Sans" font-size="13"><text x="${x}" y="${y - 24}" fill="${upC}">${up}</text><text x="${x + 25 * d}" y="${y + 4}" fill="${sideC}">${side}</text><text x="${x + 1}" y="${y + 3}" fill="${dotC}">${dot}</text></g>`;
}
const R = '#c00', G = '#0a0', B = '#00c';

function cube(label, ring) {
  const f = 'font-family="Noto Sans CJK SC" text-anchor="middle"';
  return (ring === 'top'
    ? `<circle cx="534" cy="56" r="30" fill="none" stroke="#84878c" stroke-width="6"/><circle cx="534" cy="56" r="25" fill="none" stroke="#55585c"/><g ${f} font-size="11" fill="#b5b5b5"><text x="534" y="28">北</text><text x="534" y="94">南</text><text x="502" y="61">西</text><text x="567" y="61">东</text></g>`
    : ring === 'flat'
      ? '<path d="M497 73Q534 68 571 73Q534 78 497 73z" fill="none" stroke="#84878c" stroke-width="2"/>'
      : '<ellipse cx="534" cy="73" rx="35" ry="9" fill="none" stroke="#84878c" stroke-width="4"/>') +
    `<path d="M519 41h31v31h-31z" fill="#909090" stroke="#a4a4a4"/><text ${f} x="534" y="63" font-size="18" fill="#6d7076">${label}</text>`;
}

// Pointed box seen from the front or the side.
function wire(x0, x1, yTop, yMid, yBot, cols, rows, peaks, valley) {
  let s = '', w = (x1 - x0) / cols;
  for (let i = 0; i <= cols; i++) {
    const x = x0 + i * w;
    s += line(x, yMid, x, yBot, '#fff');
    const p = peaks[i <= cols / 2 ? 0 : peaks.length - 1];
    if (i * 2 !== cols || peaks.length === 1) s += line(p, yTop, x, yMid, '#fff');
  }
  for (let j = 0; j <= rows; j++) { const y = yMid + j * (yBot - yMid) / rows; s += line(x0, y, x1, y, '#fff'); }
  if (valley) s += `<path d="M${peaks[0]} ${yTop}L${(x0 + x1) / 2} ${valley}L${peaks[1]} ${yTop}M${(x0 + x1) / 2} ${valley}V${yMid}" fill="none" stroke="#fff"/>`;
  return s;
}
function lattice(xs, ys, s = 7) {
  let o = '';
  xs.forEach(x => { o += line(x, ys[0], x, ys[ys.length - 1], '#f90'); });
  [0, ys.length - 1].forEach(j => { o += line(xs[0], ys[j], xs[xs.length - 1], ys[j], '#f90'); });
  xs.forEach(x => ys.forEach(y => { o += box(x, y, s); }));
  return o;
}
const put = (id, s) => { document.querySelector(`#${id} svg`).innerHTML = s; };

put('vtop', grid(295, 183, 14.700) + '<g shape-rendering="crispEdges">' +
  '<path d="M271 180h47v22h-47z" fill="#333"/><path d="M272 191H318M272 181v20M276 181v20M280 181v20M284 181v20M290 181v20M294 181v20M298 181v20M304 181v20M309 181v20M313 181v20M317 181v20" stroke="#fff" stroke-width="2" stroke-dasharray="2 1"/>' +
  '<path d="M275 188h8v7h-8zm10 1h3v5h-3zm16 0h3v5h-3zm5-1h8v7h-8z" fill="#fff"/>' +
  lattice([271.500, 286.500, 301.500, 317.500], [180.500, 187.500, 195.500, 202.500]) + '</g>' +
  cube('上', 'top') + tripod(27, 339, 'y', 'x', G, R, 'z', B));

put('vfront', grid(293, 311, 29.400) + wire(244, 338, 91, 149, 311, 8, 11, [262, 320], 135) +
  lattice([244.500, 275.500, 306.500, 337.500], [91.500, 164.500, 238.500, 311.500]) + cube('前', 'flat') + tripod(27, 339, 'z', 'x', B, R, 'y', G));

put('vleft', grid(295, 183, 14.700) + wire(293, 312, 73, 103, 183, 6, 16, [302]) +
  lattice([292.500, 299.500, 305.500, 312.500], [73.500, 110.500, 147.500, 184.500]) + cube('左', 'flat') + tripod(27, 339, 'z', 'y', B, G, 'x', R, true));

// Perspective ground plane: lines run to a common vanishing point.
let p = '<g>';
const far = 233, n = 14;
const xl = y => 103 - (y - far) * .72, xr = y => 417 + (y - far) * .74;
for (let i = 0; i <= n; i++) {
  const k = i / n, a = xl(far) + (xr(far) - xl(far)) * k, b = xl(380) + (xr(380) - xl(380)) * k;
  p += line(a, far, b, 380, i === n / 2 ? '#000' : '#666');
}
for (const y of [233, 238, 243, 249, 255, 262, 269, 277, 286, 296, 308, 321, 337, 356]) p += line(xl(y) - (y === 286 ? 6 : 0), y, xr(y), y, y === 286 ? '#000' : '#666');
p += '</g><defs><linearGradient id="skin" x2="0" y2="1"><stop stop-color="#e4b48a"/><stop offset=".25" stop-color="#dca877"/><stop offset=".36" stop-color="#c4925a"/><stop offset="1" stop-color="#c28e54"/></linearGradient></defs>';
p += '<path d="M205 136 224 73 254 117 283 73 303 136V297L207 298z" fill="url(#skin)"/>';
let m = '';
for (let i = 0; i <= 8; i++) {
  const x = 205 + i * 12.200;
  m += line(x, 136, 207 + i * 12, 297, '#fff');
  if (i !== 4) m += line(i < 4 ? 224 : 283, 73, x, 136, '#fff');
}
for (let j = 0; j <= 11; j++) m += line(205, 136 + j * 14.700, 303, 136 + j * 14.700, '#fff');
m += '<path d="M224 73 254 118 283 73" fill="none" stroke="#fff" stroke-width="3"/><path d="M254 118v18M202 130V70h28m54 0h20v60M206 246v54h28m51 0h19v-54" fill="none" stroke="#fff"/>';
p += m + '<g fill="none" stroke="#f90"><path d="M204 72H303" stroke-width="3"/><path d="M206 72V130M302 72V130" stroke-width="3"/><path d="M205 130 208 298H303V130M237 72 239 298M269 72 272 298M205 151H303M206 226H303"/></g>';
[[203, 72], [237, 72], [269, 72], [303, 72], [204, 151], [237, 151], [270, 151], [303, 151], [206, 226], [238, 226], [270, 226], [302, 226], [208, 299], [240, 299], [271, 298], [302, 298]].forEach(([x, y]) => { p += box(x, y, 8); });
[[206, 71], [239, 71], [301, 71], [305, 147], [305, 219], [305, 291], [206, 148], [207, 222]].forEach(([x, y]) => { p += box(x, y, 7); });
put('vpersp', p + cube('前', 'persp') + tripod(27, 339, 'z', 'x', B, R, 'y', G));
```
